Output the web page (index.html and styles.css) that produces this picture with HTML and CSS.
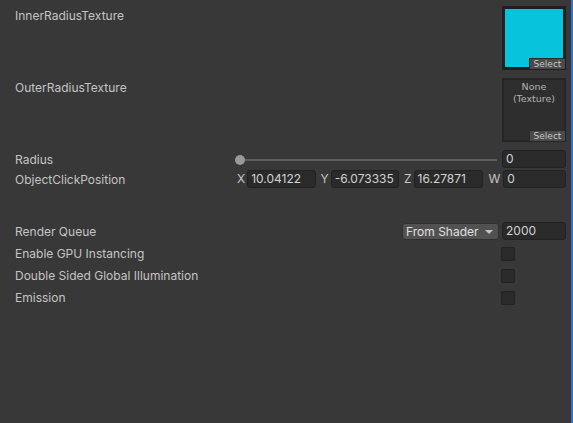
FILE: index.html
```html
<!DOCTYPE html>
<html>
<head>
<meta charset="utf-8">
<link rel="stylesheet" href="styles.css">
</head>
<body>
<div class="inspector">
  <div class="row tex-row">
    <div class="label tex-label">InnerRadiusTexture</div>
    <div class="tex-box tex-filled">
      <div class="select-btn">Select</div>
    </div>
  </div>
  <div class="row tex-row second">
    <div class="label tex-label">OuterRadiusTexture</div>
    <div class="tex-box tex-empty">
      <div class="none-text">None<br>(Texture)</div>
      <div class="select-btn">Select</div>
    </div>
  </div>
  <div class="row prop-row radius-row">
    <div class="label">Radius</div>
    <div class="value">
      <div class="slider"><div class="track"></div><div class="knob"></div></div>
      <div class="field num-field">0</div>
    </div>
  </div>
  <div class="row prop-row">
    <div class="label">ObjectClickPosition</div>
    <div class="value vec">
      <div class="vgroup"><span class="vlabel">X</span><div class="field">10.04122</div></div>
      <div class="vgroup"><span class="vlabel">Y</span><div class="field">-6.073335</div></div>
      <div class="vgroup"><span class="vlabel">Z</span><div class="field">16.27871</div></div>
      <div class="vgroup"><span class="vlabel vw">W</span><div class="field">0</div></div>
    </div>
  </div>
  <div class="row prop-row rq-row">
    <div class="label">Render Queue</div>
    <div class="value right">
      <div class="dropdown"><span>From Shader</span><span class="arrow"></span></div>
      <div class="field num-field">2000</div>
    </div>
  </div>
  <div class="row prop-row gap">
    <div class="label">Enable GPU Instancing</div>
    <div class="value right"><div class="checkbox"></div></div>
  </div>
  <div class="row prop-row gap">
    <div class="label">Double Sided Global Illumination</div>
    <div class="value right"><div class="checkbox"></div></div>
  </div>
  <div class="row prop-row gap">
    <div class="label">Emission</div>
    <div class="value right"><div class="checkbox"></div></div>
  </div>
</div>
</body>
</html>
```

FILE: styles.css
```css
html, body {
  margin: 0;
  padding: 0;
  background: #383838;
}
body {
  font-family: Inter, "Noto Sans", sans-serif;
  font-size: 12px;
  color: #c4c4c4;
}
.inspector {
  box-sizing: border-box;
  width: 573px;
  height: 423px;
  padding: 6px 5px 0 15px;
  border-right: 2px solid #2c74d3;
}
.row {
  display: flex;
}
.label {
  width: 220px;
  flex: none;
  line-height: 20px;
  height: 20px;
  white-space: nowrap;
}
.tex-row {
  justify-content: space-between;
  align-items: flex-start;
  height: 64px;
}
.tex-row.second {
  margin-top: 8px;
}
.tex-box {
  position: relative;
  box-sizing: border-box;
  width: 64px;
  height: 64px;
}
.tex-filled {
  border: 3px solid #1f1f1f;
  background: #07c3dc;
}
.tex-empty {
  border: 2px solid #252525;
  background: #2e2e2e;
}
.none-text {
  text-align: center;
  font-family: "DejaVu Sans", sans-serif;
  font-size: 9.5px;
  line-height: 12px;
  color: #b2b2b2;
  padding-top: 1px;
}
.select-btn {
  position: absolute;
  right: -2px;
  bottom: -2px;
  width: 36px;
  height: 11px;
  box-sizing: border-box;
  background: #4a4a4a;
  border-top: 1px solid #2c2c2c;
  border-left: 1px solid #2c2c2c;
  font-family: "DejaVu Sans", sans-serif;
  font-size: 9px;
  line-height: 10px;
  text-align: center;
  color: #c8c8c8;
}
.tex-empty .select-btn {
  right: -1px;
  bottom: -1px;
}
.prop-row {
  height: 20px;
  align-items: flex-start;
}
.radius-row {
  margin-top: 8px;
}
.rq-row {
  margin-top: 32px;
}
.gap {
  margin-top: 2px;
}
.value {
  flex: 1;
  display: flex;
  align-items: flex-start;
  height: 20px;
}
.value.right {
  justify-content: flex-end;
}
.slider {
  position: relative;
  flex: 1;
  height: 20px;
}
.track {
  position: absolute;
  left: 5px;
  right: 0;
  top: 9px;
  height: 2px;
  background: #5e5e5e;
}
.knob {
  position: absolute;
  left: 0;
  top: 5px;
  width: 10px;
  height: 10px;
  border-radius: 50%;
  background: #999999;
}
.field {
  box-sizing: border-box;
  height: 18px;
  line-height: 16px;
  background: #2a2a2a;
  border: 1px solid #212121;
  border-radius: 3px;
  padding-left: 3px;
  color: #d2d2d2;
  white-space: nowrap;
  overflow: hidden;
}
.num-field {
  width: 64px;
  flex: none;
  margin-left: 5px;
}
.rq-row .num-field {
  margin-left: 3px;
}
.vec {
  gap: 3px;
}
.vgroup {
  flex: 1;
  display: flex;
  align-items: flex-start;
}
.vgroup .field {
  flex: 1;
}
.vlabel {
  line-height: 18px;
  padding: 0 2px 0 2px;
  color: #c4c4c4;
}
.vlabel.vw {
  padding-left: 3px;
  padding-right: 3px;
}
.dropdown {
  box-sizing: border-box;
  width: 97px;
  height: 17px;
  margin-top: 1px;
  background: #515151;
  border: 1px solid #303030;
  border-radius: 3px;
  padding-left: 3px;
  padding-right: 5px;
  line-height: 15px;
  color: #e0e0e0;
  display: flex;
  justify-content: space-between;
  align-items: center;
}
.arrow {
  width: 0;
  height: 0;
  border-left: 4px solid transparent;
  border-right: 4px solid transparent;
  border-top: 4px solid #c4c4c4;
}
.checkbox {
  box-sizing: border-box;
  width: 14px;
  height: 14px;
  margin-top: 3px;
  margin-right: 51px;
  background: #2a2a2a;
  border: 1px solid #212121;
  border-radius: 2px;
}
```
